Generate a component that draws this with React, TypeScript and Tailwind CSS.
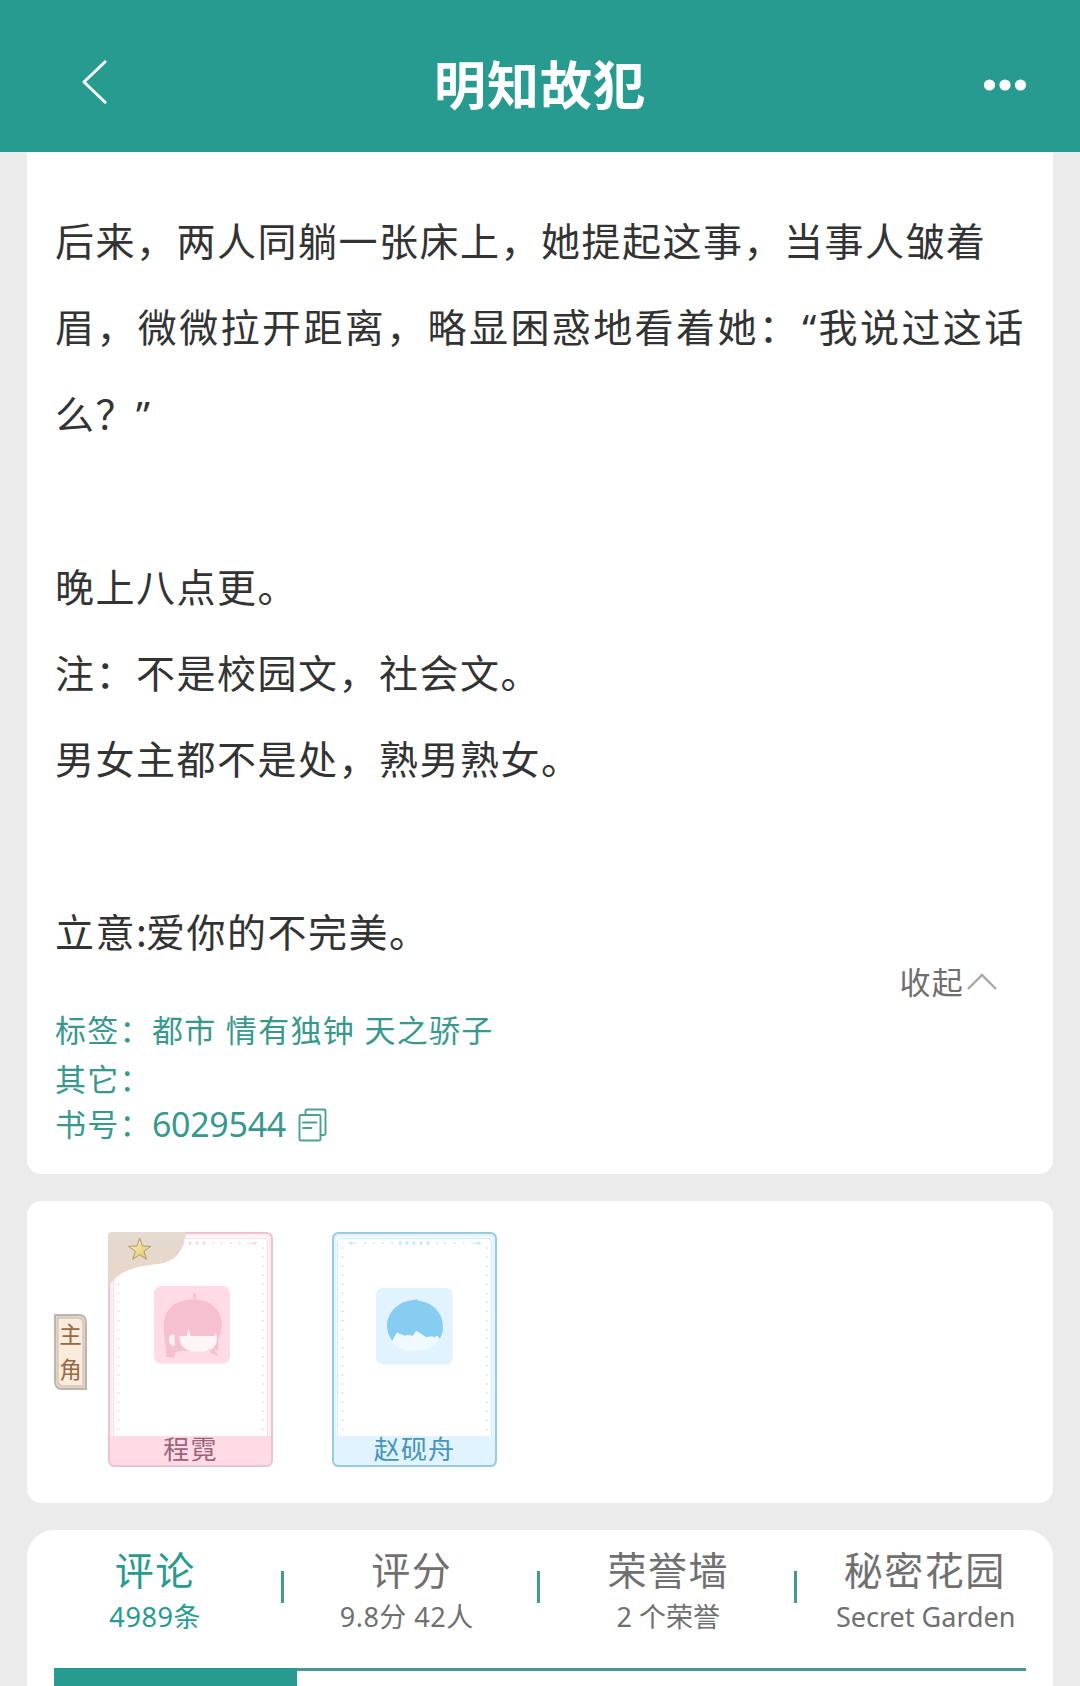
import React from "react";

const introLines: { text: React.ReactNode; spacing: string }[] = [
  { text: "后来，两人同躺一张床上，她提起这事，当事人皱着", spacing: "tracking-[1.5px]" },
  {
    text: (
      <>
        眉，微微拉开距离，略显困惑地看着她：
        <span className="ml-[2px] font-['Noto_Sans']">“</span>我说过这话
      </>
    ),
    spacing: "tracking-[2.4px]",
  },
  {
    text: (
      <>
        么？<span className="font-['Noto_Sans']">”</span>
      </>
    ),
    spacing: "tracking-[1.5px]",
  },
  { text: "", spacing: "" },
  { text: "晚上八点更。", spacing: "tracking-[1.5px]" },
  { text: "注：不是校园文，社会文。", spacing: "tracking-[1.5px]" },
  { text: "男女主都不是处，熟男熟女。", spacing: "tracking-[1.5px]" },
  { text: "", spacing: "" },
  {
    text: (
      <>
        立意<span className="tracking-[-0.8px]">:</span>爱你的不完美。
      </>
    ),
    spacing: "tracking-[1.5px]",
  },
];

const tabs = [
  { title: "评论", sub: "4989条", active: true, subSpacing: "tracking-[0.6px]" },
  { title: "评分", sub: "9.8分 42人", active: false, subSpacing: "tracking-[0.5px] pr-[10px]" },
  { title: "荣誉墙", sub: "2 个荣誉", active: false, subSpacing: "" },
  { title: "秘密花园", sub: "Secret Garden", active: false, subSpacing: "pl-[2px]" },
];

const sideDots = Array.from({ length: 21 }, (_, i) => 48 + i * 27.2);

function Frame({ edge, soft, band, children }: { edge: string; soft: string; band: string; children: React.ReactNode }) {
  return (
    <svg viewBox="0 0 495 705" className="absolute inset-0 h-full w-full">
      <rect x="3" y="3" width="489" height="699" rx="16" fill="#fff" />
      <rect x="10" y="10" width="475" height="680" rx="8" fill="none" stroke={soft} strokeWidth="7" opacity="0.55" />
      <rect x="17" y="19" width="461" height="640" rx="10" fill="none" stroke={soft} strokeWidth="3" />
      <g fill={soft}>
        {sideDots.map((y) => (
          <g key={y}>
            <rect x="27" y={y - 2} width="8" height="4" />
            <rect x="461" y={y - 2} width="8" height="4" />
          </g>
        ))}
        {[204, 225, 246, 267, 288].map((x) => (
          <rect key={x} x={x - 4} y="28" width="8" height="11" rx="3" />
        ))}
        {[98, 125, 152, 180, 315, 340, 368, 395].map((x) => (
          <circle key={x} cx={x} cy="33" r="3" />
        ))}
        <path d="M48 33l8-5 6 4h16v3H62l-6 4zM450 33l-12-5-5 4h-14v3h14l5 4z" />
      </g>
      <path d="M2 612H493V686Q493 699 478 699H17Q2 699 2 686Z" fill={band} />
      <rect x="3" y="3" width="489" height="699" rx="16" fill="none" stroke={edge} strokeWidth="6" />
      {children}
    </svg>
  );
}

function Girl() {
  return (
    <div className="relative h-[235px] w-[165px]">
      <Frame edge="#edc3d0" soft="#f8dae3" band="#ffdbe5">
        <defs>
          <linearGradient id="corner" x1="0" y1="0" x2="0" y2="1">
            <stop offset="0" stopColor="#e4dad0" />
            <stop offset="1" stopColor="#ead6c9" />
          </linearGradient>
          <linearGradient id="star" x1="0" y1="0" x2="1" y2="1">
            <stop offset="0" stopColor="#fff6cf" />
            <stop offset="1" stopColor="#dfbf62" />
          </linearGradient>
        </defs>
        <path d="M0 12Q0 0 12 0H234C230 48 208 82 170 92C120 104 45 95 0 165Z" fill="url(#corner)" />
        <path
          d="M95 18L103 42L129 43L108 58L116 82L95 68L74 82L82 58L61 43L87 42Z"
          fill="url(#star)"
          stroke="#b29a68"
          strokeWidth="3"
          strokeLinejoin="round"
        />
        <rect x="138" y="162" width="228" height="233" rx="22" fill="#ffdce5" />
        <path d="M259 204L256 188L260 182L264 188L261 204" fill="#f4b9ca" />
        <path
          d="M173 374C178 350 164 310 168 266C176 222 212 202 258 202C304 202 336 230 341 268C345 296 332 312 330 332L332 356L318 350L330 372L306 362L310 356H220L201 360L199 378Z"
          fill="#f6c0d0"
        />
        <path d="M214 312H326C330 342 314 360 272 359C230 359 215 344 214 312Z" fill="#fff5f8" />
        <path d="M200 308C177 302 177 342 200 342Z" fill="#fff5f8" />
        <path d="M236 314L241 290L249 314ZM318 314L324 302L327 314Z" fill="#fff5f8" />
      </Frame>
      <div className="absolute inset-x-0 bottom-[2px] text-center text-[26px] leading-[31px] tracking-[1.2px] text-[#9b637c]">程霓</div>
    </div>
  );
}

function Boy() {
  return (
    <div className="relative h-[235px] w-[165px]">
      <Frame edge="#98cbdc" soft="#c9e9f3" band="#e0f3ff">
        <rect x="132" y="167" width="230" height="231" rx="22" fill="#e1f3ff" />
        <path d="M178 318C182 345 210 357 247 357C287 357 316 344 322 316L290 300H200Z" fill="#eff9ff" />
        <path
          d="M181 326C154 292 162 242 203 217C225 204 248 205 255 202L259 206C302 210 332 243 333 282C333 300 329 313 323 320L316 311L306 316L300 313L283 316L253 296L242 311L226 308L219 311L199 304L195 301L190 309Z"
          fill="#87cdf1"
        />
      </Frame>
      <div className="absolute inset-x-0 bottom-[2px] text-center text-[26px] leading-[31px] tracking-[1.2px] text-[#4694b9]">赵砚舟</div>
    </div>
  );
}

export default function App() {
  return (
    <div className="flex h-[1686px] w-[1080px] flex-col overflow-hidden bg-[#ebebeb] font-['Noto_Sans','Noto_Sans_CJK_SC',sans-serif]">
      <header className="flex h-[152px] shrink-0 items-center justify-between bg-[#279b8f] pr-[53px] pl-[80px] pt-[14px]">
        <svg
          viewBox="0 0 30 50"
          className="mb-[6px] h-[50px] w-[30px] pt-[4px]"
          fill="none"
          stroke="#fff"
          strokeWidth="3.2"
          strokeLinecap="round"
          strokeLinejoin="round"
        >
          <path d="M26 3L3 25L26 47" />
        </svg>
        <h1 className="mr-[13px] font-['Noto_Sans_CJK_SC',sans-serif] text-[52px] leading-[68px] font-bold tracking-[1px] text-white">明知故犯</h1>
        <svg viewBox="0 0 44 12" className="mb-[-3px] h-[12px] w-[44px]" fill="#fff">
          <circle cx="6.500" cy="6" r="5.600" />
          <circle cx="22" cy="6" r="5.600" />
          <circle cx="37.500" cy="6" r="5.600" />
        </svg>
      </header>

      <section className="mx-[27px] flex h-[1022px] shrink-0 flex-col rounded-b-[14px] bg-white px-[28px] pt-[44px]">
        <div className="font-['Noto_Sans_CJK_SC',sans-serif] text-[39px] leading-[86.4px] whitespace-nowrap text-[#333]">
          {introLines.map((l, i) => (
            <p key={i} className={`h-[86.4px] ${l.spacing}`}>
              {l.text}
            </p>
          ))}
        </div>
        <div className="mt-[-12px] flex h-[40px] items-center justify-end pr-[27px] text-[#6e6e6e]">
          <span className="text-[31px] leading-[40px] tracking-[1.3px]">收起</span>
          <svg viewBox="0 0 32 18" className="ml-[2px] h-[18px] w-[32px]" fill="none" stroke="#a8a8a8" strokeWidth="2.4">
            <path d="M2 16L16 2L30 16" />
          </svg>
        </div>
        <div className="text-[31px] tracking-[1.3px] text-[#37998d]">
          <p className="h-[54px] pt-[4px] leading-[48px]">标签：都市 情有独钟 天之骄子</p>
          <p className="h-[46px] leading-[46px]">其它：</p>
          <div className="flex h-[44px] items-center leading-[44px]">
            <span>书号：</span>
            <span className="text-[34px] tracking-[-0.3px]">6029544</span>
            <svg
              viewBox="0 0 30 34"
              className="mt-[2px] ml-[12px] h-[34px] w-[30px]"
              fill="none"
              stroke="#4aa095"
              strokeWidth="1.9"
              strokeLinecap="round"
              strokeLinejoin="round"
            >
              <path d="M7.500 6.500V3Q7.500 1.500 9 1.500H26Q27.500 1.500 27.500 3V25.500Q27.500 27 26 27H23" />
              <rect x="1.500" y="7" width="21" height="25.500" rx="1.500" />
              <path d="M5 14.500H18.500M5 20H13.500" />
            </svg>
          </div>
        </div>
      </section>

      <section className="mx-[27px] mt-[27px] flex h-[302px] shrink-0 items-start rounded-[14px] bg-white pt-[31px] pl-[27px]">
        <div className="relative mt-[82px] flex h-[76px] w-[33px] flex-col items-center pt-[3px] text-[22.5px] leading-[35px] text-[#96693f]">
          <svg viewBox="0 0 33 76" className="absolute inset-0 h-full w-full">
            <path d="M1 1H25Q32 1 32 9V75H8Q1 75 1 67Z" fill="#fbebdd" stroke="#c0b3a7" strokeWidth="2" />
            <path d="M3.500 3.500H24Q29.500 4 29.500 10V72.500H9Q3.500 72 3.500 66Z" fill="none" stroke="#d6cabe" strokeWidth="2.500" />
          </svg>
          <span className="relative">主</span>
          <span className="relative">角</span>
        </div>
        <div className="ml-[21px] flex gap-[59px]">
          <Girl />
          <Boy />
        </div>
      </section>

      <section className="mx-[27px] mt-[27px] h-[156px] shrink-0 rounded-t-[27px] bg-white">
        <div className="grid h-[138px] grid-cols-4">
          {tabs.map((t, i) => (
            <div
              key={t.title}
              className={`relative flex flex-col items-center pt-[10px] whitespace-nowrap ${t.active ? "text-[#279b8f]" : "text-[#707070]"}`}
            >
              <div className="text-[39px] leading-[60px] tracking-[1.5px]">{t.title}</div>
              <div className={`text-[27px] leading-[34px] ${t.subSpacing}`}>{t.sub}</div>
              {i < 3 && <div className="absolute top-[41px] right-0 h-[32px] w-[3px] bg-[#3f9a8f]" />}
            </div>
          ))}
        </div>
        <div className="mx-[27px] h-[18px] border-t-[3px] border-[#4a978e]">
          <div className="mt-[-3px] h-[18px] w-[243px] bg-[#279b8f]" />
        </div>
      </section>
    </div>
  );
}
